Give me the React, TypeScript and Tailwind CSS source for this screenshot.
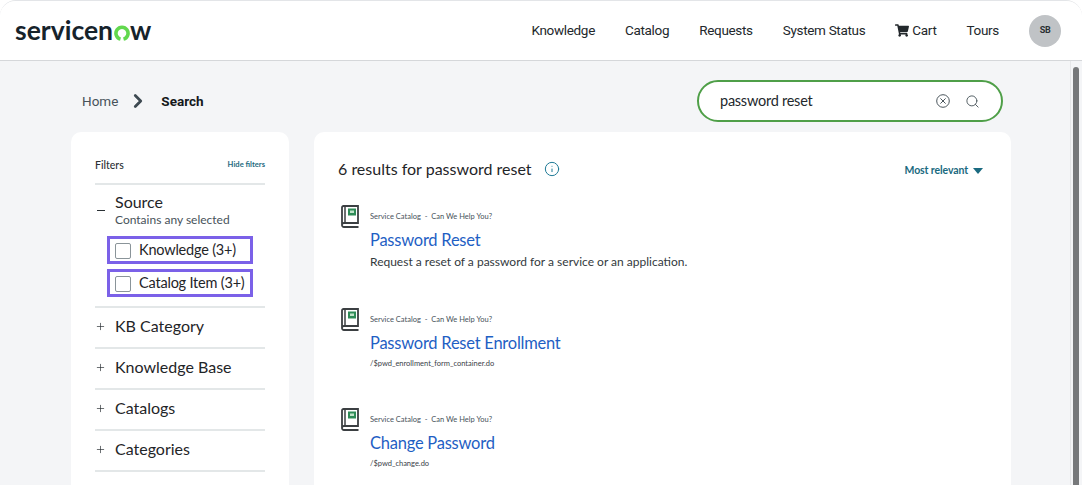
import { Search, Info, Plus, ChevronRight } from "lucide-react";
import { FaShoppingCart } from "react-icons/fa";

const navLinks = ["Knowledge", "Catalog", "Requests", "System Status"];

const results = [
  { title: "Password Reset", sub: "Request a reset of a password for a service or an application.", isPath: false, className: "h-[103px]" },
  { title: "Password Reset Enrollment", sub: "/$pwd_enrollment_form_container.do", isPath: true, className: "h-[100px]" },
  { title: "Change Password", sub: "/$pwd_change.do", isPath: true, className: "h-[80px]" },
];

const facets = ["KB Category", "Knowledge Base", "Catalogs", "Categories"];

function BookIcon() {
  return (
    <svg width="18" height="23" viewBox="0 0 18 23" fill="none" className="mt-[1px] shrink-0">
      <path d="M1 19.5V2.5A1.5 1.5 0 0 1 2.5 1H17v17H3a2 2 0 0 0-2 2.2A1.9 1.9 0 0 0 3 22h14.5" stroke="#3b3f42" strokeWidth="1.8" />
      <path d="M4 1v17" stroke="#3b3f42" strokeWidth="1.5" />
      <rect x="7" y="3.5" width="8" height="7" fill="#2e8b57" />
      <rect x="9" y="5.5" width="4" height="2.5" fill="#bfe3c9" />
    </svg>
  );
}

function Logo() {
  return (
    <div className="flex items-center font-['Lato',sans-serif] font-bold text-[26.5px] leading-none text-[#16232b]">
      <span>servicen</span>
      <svg width="16" height="16" viewBox="0 0 17 17" className="mx-[0.5px] mt-[5px]">
        <path d="M6.9 15A6.4 6.4 0 1 1 10.1 15" fill="none" stroke="#62d84e" strokeWidth="3.8" />
      </svg>
      <span>w</span>
    </div>
  );
}

function CheckRow({ label }: { label: string }) {
  return (
    <div className="ml-[12px] flex h-[28px] w-[146px] items-center border-[3px] border-[#7b61e8] pl-[5px]">
      <span className="mt-[2px] h-[16px] w-[16px] shrink-0 rounded-[2px] border border-[#8a9499] bg-white" />
      <span className="ml-[8px] whitespace-nowrap text-[14.5px] tracking-[-0.2px] text-[#1f2528]">{label}</span>
    </div>
  );
}

export default function App() {
  return (
    <div className="relative h-[485px] w-[1082px] overflow-hidden bg-white font-['Lato',sans-serif]">
      <div className="h-full overflow-hidden rounded-t-[16px] border-t border-[#e3e5e8] bg-[#f4f5f7]">
        {/* Header */}
        <header className="flex h-[60px] items-center justify-between border-b border-[#d5d7da] bg-white pl-[15px] pr-[21px]">
          <Logo />
          <nav className="flex items-center gap-[30px] font-['Roboto',sans-serif] text-[13.5px] tracking-[-0.32px] text-[#23282c]">
            {navLinks.map((link) => (
              <span key={link}>{link}</span>
            ))}
            <span className="flex items-center gap-[3px]">
              <FaShoppingCart className="h-[13px] w-[14px]" />
              Cart
            </span>
            <span>Tours</span>
            <span className="flex h-[32px] w-[32px] items-center justify-center rounded-full bg-[#c0c3c6] text-[9px] font-bold text-[#2b3034]">
              SB
            </span>
          </nav>
        </header>

        <main className="px-[71px]">
          {/* Breadcrumb and search */}
          <div className="mb-[10px] mt-[19px] flex h-[42px] items-center justify-between pl-[11px] pr-[8px]">
            <div className="flex items-center font-['Roboto',sans-serif] text-[13.5px]">
              <span className="text-[#47525a]">Home</span>
              <ChevronRight className="ml-[9px] mr-[12px] h-[22px] w-[22px] text-[#3e4a52]" strokeWidth={3} />
              <span className="font-bold text-[#14181b]">Search</span>
            </div>
            <div className="flex h-[42px] w-[306px] items-center rounded-full border-2 border-[#4f9f48] bg-white pl-[21px] pr-[21px]">
              <span className="flex-1 text-[14.5px] tracking-[-0.25px] text-[#23282c]">password reset</span>
              <svg width="14" height="14" viewBox="0 0 14 14" fill="none" stroke="#4b565c" strokeWidth="1">
                <circle cx="7" cy="7" r="6.3" />
                <path d="M4.4 4.4l5.2 5.2M9.6 4.4l-5.2 5.2" />
              </svg>
              <Search className="ml-[15px] h-[15px] w-[15px] text-[#4b565c]" strokeWidth={1.5} />
            </div>
          </div>

          <div className="flex gap-[25px]">
            {/* Filters */}
            <aside className="h-[400px] w-[218px] shrink-0 rounded-[10px] bg-white px-[24px]">
              <div className="flex h-[53px] items-end justify-between border-b-2 border-[#e3e7e8] pb-[9px]">
                <span className="text-[10.5px] font-medium text-[#2a3034]">Filters</span>
                <span className="mb-[4px] text-[7.6px] font-bold text-[#1f6b80]">Hide filters</span>
              </div>
              <div className="relative h-[123px] border-b-2 border-[#e3e7e8] pt-[7px]">
                <span className="absolute left-[2px] top-[25px] h-[1px] w-[8px] bg-[#2a3034]" />
                <div className="pl-[20px] text-[16px] leading-[20px] text-[#1f2528]">Source</div>
                <div className="pl-[20px] text-[12px] leading-[15px] text-[#47525a]">Contains any selected</div>
                <div className="mt-[9px] flex flex-col gap-[5px]">
                  <CheckRow label="Knowledge (3+)" />
                  <CheckRow label="Catalog Item (3+)" />
                </div>
              </div>
              {facets.map((facet) => (
                <div key={facet} className="flex h-[41px] items-center border-b-2 border-[#e3e7e8] pb-[3px]">
                  <Plus className="h-[11px] w-[11px] text-[#2a3034]" strokeWidth={1.5} />
                  <span className="ml-[9px] text-[16px] text-[#1f2528]">{facet}</span>
                </div>
              ))}
            </aside>

            {/* Results */}
            <section className="h-[400px] flex-1 rounded-[10px] bg-white pl-[24px] pr-[28px]">
              <div className="flex h-[72px] items-center justify-between pb-[2px] pt-[4px]">
                <div className="flex items-center">
                  <span className="text-[16px] text-[#1f2528]">6 results for password reset</span>
                  <Info className="ml-[12px] h-[16px] w-[16px] text-[#1f7a96]" strokeWidth={1.5} />
                </div>
                <div className="mt-[4px] flex items-center gap-[5px] text-[10.5px] font-bold tracking-[-0.1px] text-[#1a6a80]">
                  Most relevant
                  <svg width="10" height="6" viewBox="0 0 10 6">
                    <path d="M0 0h10L5 6z" fill="#1a6a80" />
                  </svg>
                </div>
              </div>
              {results.map((r) => (
                <div key={r.title} className={`flex pl-[3px] ${r.className}`}>
                  <BookIcon />
                  <div className="ml-[11px] pt-[8px]">
                    <div className="text-[7.5px] leading-[10px] text-[#47525a]">Service Catalog&nbsp; -&nbsp; Can We Help You?</div>
                    <div className="mt-[6px] text-[16.5px] leading-[24px] tracking-[-0.24px] text-[#1f5fc4]">{r.title}</div>
                    <div className={r.isPath ? "mt-[4px] text-[7.5px] leading-[10px] text-[#3a4248]" : "mt-[1px] text-[12px] leading-[18px] text-[#33393d]"}>
                      {r.sub}
                    </div>
                  </div>
                </div>
              ))}
            </section>
          </div>
        </main>
      </div>

      {/* Overlay scrollbar */}
      <div className="absolute bottom-0 right-0 top-[61px] w-[12px] border-l border-[#e6e7e9] bg-[#f4f5f7]">
        <div className="ml-[2px] mt-[6px] h-[430px] w-[6px] rounded-full bg-[#77797b]" />
      </div>
    </div>
  );
}
